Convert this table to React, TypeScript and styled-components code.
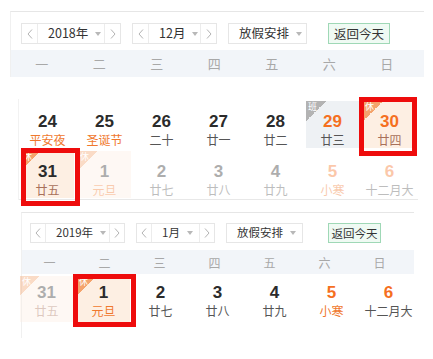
import styled, { createGlobalStyle } from 'styled-components';

const GlobalStyle = createGlobalStyle`
  body {
    margin: 0;
    background: #fff;
    font-family: "Noto Sans CJK SC", "Noto Sans", sans-serif;
  }
`;

type Tag = 'rest' | 'work';

interface Day {
  n: number;
  lunar: string;
  weekend?: boolean;
  festival?: boolean;
  tag?: Tag;
  faded?: boolean;
  mark?: [number, number, number, number];
}

interface Bar {
  height: number;
  font: number;
  arrow: number;
  year: number;
  month: number;
  holiday: number;
  button: number;
  buttonGap: number;
  padTop: number;
  padLeft: number;
}

const WEEK = ['一', '二', '三', '四', '五', '六', '日'];

const decRows: Day[][] = [
  [
    { n: 24, lunar: '平安夜', festival: true },
    { n: 25, lunar: '圣诞节', festival: true },
    { n: 26, lunar: '二十' },
    { n: 27, lunar: '廿一' },
    { n: 28, lunar: '廿二' },
    { n: 29, lunar: '廿三', weekend: true, tag: 'work' },
    { n: 30, lunar: '廿四', weekend: true, tag: 'rest', mark: [-4, -1, -8, -4] },
  ],
  [
    { n: 31, lunar: '廿五', tag: 'rest', mark: [-3, -6, -8, 0] },
    { n: 1, lunar: '元旦', festival: true, tag: 'rest', faded: true },
    { n: 2, lunar: '廿七', faded: true },
    { n: 3, lunar: '廿八', faded: true },
    { n: 4, lunar: '廿九', faded: true },
    { n: 5, lunar: '小寒', weekend: true, festival: true, faded: true },
    { n: 6, lunar: '十二月大', weekend: true, faded: true },
  ],
];

const janRow: Day[] = [
  { n: 31, lunar: '廿五', tag: 'rest', faded: true },
  { n: 1, lunar: '元旦', festival: true, tag: 'rest', mark: [-2, -6, -5, -4] },
  { n: 2, lunar: '廿七' },
  { n: 3, lunar: '廿八' },
  { n: 4, lunar: '廿九' },
  { n: 5, lunar: '小寒', weekend: true, festival: true },
  { n: 6, lunar: '十二月大', weekend: true },
];

const bigBar: Bar = {
  height: 21, font: 12.5, arrow: 16, year: 100, month: 85, holiday: 79,
  button: 62, buttonGap: 21, padTop: 11, padLeft: 10,
};

const smallBar: Bar = {
  height: 20, font: 11.5, arrow: 15, year: 95, month: 79, holiday: 77,
  button: 53, buttonGap: 25, padTop: 10, padLeft: 8,
};

const Chevron = ({ dir }: { dir: 'left' | 'right' }) => (
  <svg width="6" height="10" viewBox="0 0 6 10">
    <polyline
      points={dir === 'left' ? '5,0.5 1,5 5,9.5' : '1,0.5 5,5 1,9.5'}
      fill="none"
      stroke="#b3b3b3"
      strokeWidth="1"
    />
  </svg>
);

const Toolbar = ({ bar, year, month }: { bar: Bar; year: string; month: string }) => (
  <Controls $bar={bar}>
    <Spinner $w={bar.year}>
      <ArrowBtn $w={bar.arrow}><Chevron dir="left" /></ArrowBtn>
      <Picked>{year}<Caret /></Picked>
      <ArrowBtn $w={bar.arrow}><Chevron dir="right" /></ArrowBtn>
    </Spinner>
    <Spinner $w={bar.month}>
      <ArrowBtn $w={bar.arrow}><Chevron dir="left" /></ArrowBtn>
      <Picked>{month}<Caret /></Picked>
      <ArrowBtn $w={bar.arrow}><Chevron dir="right" /></ArrowBtn>
    </Spinner>
    <Spinner $w={bar.holiday}>
      <Picked>放假安排<Caret /></Picked>
    </Spinner>
    <TodayBtn $w={bar.button} $gap={bar.buttonGap}>返回今天</TodayBtn>
  </Controls>
);

const DayCell = ({ d }: { d: Day }) => (
  <Cell $tag={d.tag} $faded={d.faded}>
    {d.tag && <Corner $tag={d.tag}>{d.tag === 'rest' ? '休' : '班'}</Corner>}
    <Num $weekend={d.weekend}>{d.n}</Num>
    <Lunar $festival={d.festival} $rest={d.tag === 'rest'}>{d.lunar}</Lunar>
    {d.mark && (
      <Mark $t={d.mark[0]} $r={d.mark[1]} $b={d.mark[2]} $l={d.mark[3]} />
    )}
  </Cell>
);

export default function App() {
  return (
    <>
      <GlobalStyle />
      <Page>
        <HeadPanel>
          <Toolbar bar={bigBar} year="2018年" month="12月" />
          <WeekBand $h={27} $col={57.5} $pad={2} $font={13} $gap={6}>
            {WEEK.map((w) => <span key={w}>{w}</span>)}
          </WeekBand>
        </HeadPanel>

        <DaysBlock>
          {decRows.map((row, i) => (
            <DayGrid key={i} $top={12} $shift={0}>
              {row.map((d) => <DayCell key={`${d.n}-${d.lunar}`} d={d} />)}
            </DayGrid>
          ))}
        </DaysBlock>

        <MonthPanel>
          <Toolbar bar={smallBar} year="2019年" month="1月" />
          <WeekBand $h={24} $col={55} $pad={0} $font={12} $gap={7}>
            {WEEK.map((w) => <span key={w}>{w}</span>)}
          </WeekBand>
          <DayGrid $top={8} $shift={-4}>
            {janRow.map((d) => <DayCell key={`${d.n}-${d.lunar}`} d={d} />)}
          </DayGrid>
        </MonthPanel>
      </Page>
    </>
  );
}

const Page = styled.div`
  width: 433px;
  height: 359px;
  overflow: hidden;
  padding-top: 11px;
  box-sizing: border-box;
`;

const HeadPanel = styled.section`
  margin-left: 10px;
  width: 413px;
  border-top: 1px solid #e6e6e6;
  border-left: 1px solid #f0f0f0;
`;

const MonthPanel = styled.section`
  margin: 12px 0 0 21px;
  width: 392px;
  padding-bottom: 14px;
  border-top: 1px solid #e6e6e6;
  border-left: 1px solid #f0f0f0;
`;

const DaysBlock = styled.section`
  margin: 22px 0 0 18px;
  width: 399px;
  border-left: 1px solid #f2f2f2;
  & > div:last-child {
    border-bottom: 1px solid #e8e8e8;
  }
`;

const Controls = styled.div<{ $bar: Bar }>`
  display: flex;
  gap: 11px;
  padding: ${(p) => p.$bar.padTop}px 0 0 ${(p) => p.$bar.padLeft}px;
  height: ${(p) => p.$bar.height}px;
  font-size: ${(p) => p.$bar.font}px;
  color: #333;
`;

const Spinner = styled.div<{ $w: number }>`
  width: ${(p) => p.$w}px;
  display: flex;
  box-sizing: border-box;
  border: 1px solid #e6e6e6;
  background: #fff;
`;

const ArrowBtn = styled.div<{ $w: number }>`
  width: ${(p) => p.$w - 1}px;
  display: flex;
  align-items: center;
  justify-content: center;
  &:first-child {
    border-right: 1px solid #ececec;
  }
  &:last-child {
    border-left: 1px solid #ececec;
  }
`;

const Picked = styled.div`
  flex: 1;
  display: flex;
  align-items: center;
  padding-left: 10px;
  white-space: nowrap;
  line-height: 1;
`;

const Caret = styled.i`
  margin-left: 7px;
  width: 0;
  height: 0;
  border-left: 3.5px solid transparent;
  border-right: 3.5px solid transparent;
  border-top: 4px solid #b8b8b8;
`;

const TodayBtn = styled.div<{ $w: number; $gap: number }>`
  width: ${(p) => p.$w}px;
  margin-left: ${(p) => p.$gap - 11}px;
  box-sizing: border-box;
  display: flex;
  align-items: center;
  justify-content: center;
  border: 1px solid #9fd8b6;
  background: #effaf3;
  color: #333;
  white-space: nowrap;
`;

const WeekBand = styled.div<{ $h: number; $col: number; $pad: number; $font: number; $gap: number }>`
  margin-top: ${(p) => p.$gap}px;
  height: ${(p) => p.$h}px;
  padding-left: ${(p) => p.$pad}px;
  display: grid;
  grid-template-columns: repeat(7, ${(p) => p.$col}px);
  align-items: center;
  justify-items: center;
  background: #f2f5f9;
  color: #a8a8a8;
  font-size: ${(p) => p.$font}px;
`;

const DayGrid = styled.div<{ $top: number; $shift: number }>`
  display: grid;
  grid-template-columns: repeat(7, 57px);
  height: 50px;
  margin-left: ${(p) => p.$shift}px;
  --pad: ${(p) => p.$top}px;
`;

const Cell = styled.div<{ $tag?: Tag; $faded?: boolean }>`
  position: relative;
  margin: 2px;
  padding-top: calc(var(--pad) - 1px);
  display: flex;
  flex-direction: column;
  align-items: center;
  background: ${(p) => (p.$tag === 'rest' ? '#fdefe3' : p.$tag === 'work' ? '#eef1f4' : 'transparent')};
  opacity: ${(p) => (p.$faded ? 0.38 : 1)};
`;

const Corner = styled.span<{ $tag: Tag }>`
  position: absolute;
  top: 0;
  left: 0;
  width: 20px;
  height: 20px;
  padding: 1px 0 0 2px;
  box-sizing: border-box;
  font-size: 9px;
  line-height: 10px;
  color: #fff;
  background: linear-gradient(
    135deg,
    ${(p) => (p.$tag === 'rest' ? '#f4a36c' : '#b3b3b3')} 50%,
    transparent 50%
  );
`;

const Num = styled.div<{ $weekend?: boolean }>`
  font-family: "Liberation Sans", Arial, sans-serif;
  font-weight: bold;
  font-size: 17px;
  line-height: 20px;
  color: ${(p) => (p.$weekend ? '#f5701f' : '#2b2b2b')};
`;

const Lunar = styled.div<{ $festival?: boolean; $rest?: boolean }>`
  font-size: 12px;
  line-height: 16px;
  white-space: nowrap;
  color: ${(p) => (p.$festival ? '#f0782d' : p.$rest ? '#a8705a' : '#555')};
`;

const Mark = styled.div<{ $t: number; $r: number; $b: number; $l: number }>`
  position: absolute;
  top: ${(p) => p.$t}px;
  right: ${(p) => p.$r}px;
  bottom: ${(p) => p.$b}px;
  left: ${(p) => p.$l}px;
  border: 5px solid #ee0c0c;
  z-index: 2;
  pointer-events: none;
`;
